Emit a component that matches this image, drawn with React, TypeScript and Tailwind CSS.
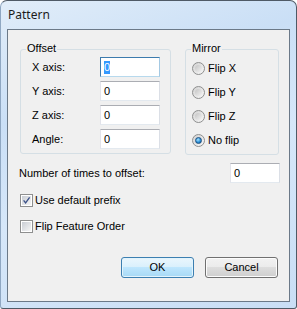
import clsx from 'clsx';

type BoxProps = { value: string; focused?: boolean; className?: string };

function TextBox({ value, focused, className }: BoxProps) {
  return (
    <div
      className={clsx(
        'flex h-[20px] items-center border bg-white pl-[3px]',
        focused
          ? 'border-[#3d7bad] border-b-[#b7d9ed] border-r-[#a4c9e3]'
          : 'border-[#abadb3] border-b-[#e3e9ef] border-l-[#e2e3ea] border-r-[#dbdfe6]',
        className,
      )}
    >
      {focused ? <span className="bg-[#3399ff] leading-[13px] text-white">{value}</span> : value}
    </div>
  );
}

function Radio({ label, checked }: { label: string; checked?: boolean }) {
  return (
    <div className="flex h-[20px] items-center gap-[3px]">
      <div className="flex size-[13px] items-center justify-center rounded-full border border-[#8e8f8f] bg-[linear-gradient(135deg,#d2d2d2,#f8f8f8)]">
        {checked ? (
          <div className="size-[7px] rounded-full border border-[#1b4f80] bg-[radial-gradient(circle_at_40%_35%,#a8e4ff,#2a8fd6_55%,#0b4f90)]" />
        ) : (
          <div className="size-[7px] rounded-full bg-[linear-gradient(135deg,#c4c4c4,#f2f2f2)]" />
        )}
      </div>
      <span>{label}</span>
    </div>
  );
}

function Check({ label, checked }: { label: string; checked?: boolean }) {
  return (
    <div className="flex h-[20px] items-center gap-[2px] pl-[12px]">
      <div className="size-[13px] border border-[#8e8f8f] bg-white p-[1px]">
        <div className="relative size-full bg-[linear-gradient(135deg,#c9cdd4,#f6f6f6)]">
          {checked && (
            <svg viewBox="0 0 9 9" className="absolute inset-0 size-[9px]">
              <path d="M1.6 4.4 L3.6 6.9 L7.6 1.3" fill="none" stroke="#3b5188" strokeWidth="1.3" />
            </svg>
          )}
        </div>
      </div>
      <span>{label}</span>
    </div>
  );
}

function Button({ label, isDefault }: { label: string; isDefault?: boolean }) {
  return (
    <div
      className={clsx(
        'flex h-[21px] w-[73px] items-center justify-center rounded-[3px] border',
        isDefault
          ? 'border-[#3c7fb1] bg-[linear-gradient(#eaf6fd_0%,#d9f0fc_50%,#bee6fd_50%,#a7d9f5_100%)] shadow-[inset_0_0_0_1px_#e3f4fc]'
          : 'border-[#707070] bg-[linear-gradient(#f2f2f2_0%,#ebebeb_50%,#dddddd_50%,#cfcfcf_100%)] shadow-[inset_0_0_0_1px_#fcfcfc]',
      )}
    >
      {label}
    </div>
  );
}

const AXES = ['X axis:', 'Y axis:', 'Z axis:', 'Angle:'];
const FLIPS = ['Flip X', 'Flip Y', 'Flip Z', 'No flip'];

export default function App() {
  return (
    <div className="h-[309px] w-[297px] bg-white">
      <div className="flex h-full flex-col rounded-t-[7px] rounded-b-[3px] border border-[#4f5a66] border-l-[#8fa7c2] bg-[linear-gradient(160deg,#e1edf9,#cadff6_30%,#d6e7f9_55%,#c9def5)] px-[6px] pb-[6px]">
        <div className="flex h-[28px] items-center pl-[1px] font-['Noto_Sans',sans-serif] text-[12px] text-[#1b1b1b]">
          Pattern
        </div>
        <div className="flex flex-1 flex-col border border-[#6b7988] bg-[#f0f0f0] font-['Liberation_Sans',sans-serif] text-[11px] text-black">
          <div className="mt-[19px] flex items-start pl-[12px]">
            <div className="relative h-[105px] w-[151px] rounded-[3px] border border-[#d5dfe5]">
              <span className="absolute left-[5px] top-[-8px] bg-[#f0f0f0] px-[1px] leading-[13px]">Offset</span>
              <div className="flex flex-col gap-[4px] pl-[11px] pt-[7px]">
                {AXES.map((a, i) => (
                  <div key={a} className="flex h-[20px] items-center">
                    <span className="w-[68px]">{a}</span>
                    <TextBox value="0" focused={i === 0} className="w-[60px]" />
                  </div>
                ))}
              </div>
            </div>
            <div className="relative ml-[14px] h-[106px] w-[94px] rounded-[3px] border border-[#d5dfe5]">
              <span className="absolute left-[5px] top-[-8px] bg-[#f0f0f0] px-[1px] leading-[13px]">Mirror</span>
              <div className="flex flex-col gap-[4px] pl-[6px] pt-[8px]">
                {FLIPS.map((f, i) => (
                  <Radio key={f} label={f} checked={i === 3} />
                ))}
              </div>
            </div>
          </div>
          <div className="mt-[8px] flex h-[20px] items-center justify-between pl-[11px] pr-[9px]">
            <span>Number of times to offset:</span>
            <TextBox value="0" className="w-[50px]" />
          </div>
          <div className="mt-[7px]">
            <Check label="Use default prefix" checked />
          </div>
          <div className="mt-[6px]">
            <Check label="Flip Feature Order" />
          </div>
          <div className="mt-[21px] flex justify-end gap-[11px] pr-[11px]">
            <Button label="OK" isDefault />
            <Button label="Cancel" />
          </div>
        </div>
      </div>
    </div>
  );
}
